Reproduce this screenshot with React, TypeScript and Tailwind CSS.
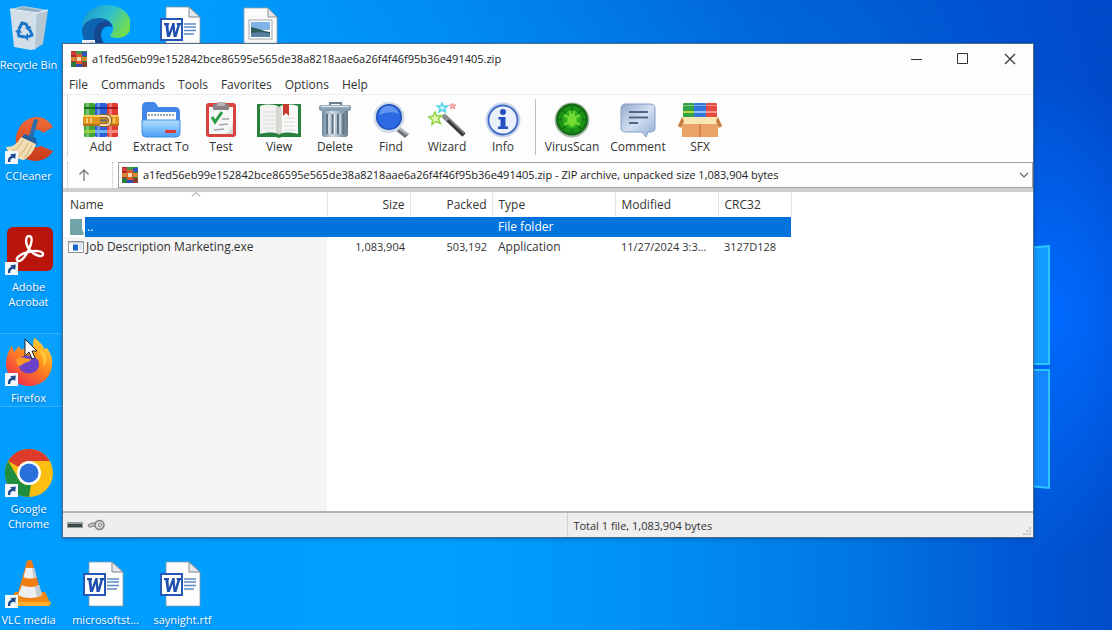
import type { ReactNode } from "react";

const FONT = "font-['Open_Sans','Noto_Sans',sans-serif]";
const ARCHIVE = "a1fed56eb99e152842bce86595e565de38a8218aae6a26f4f46f95b36e491405.zip";

/* ---------- desktop icons ---------- */

function ShortcutArrow() {
  return (
    <svg viewBox="0 0 13 13" className="absolute bottom-0 left-0 size-[13px]" aria-hidden="true">
      <rect width="13" height="13" fill="#f4f8fc" />
      <path d="M3 11C2.6 7.4 4 5.3 6.6 5L5.2 3.2 10.8 2.4 10.2 8 8.7 6.7C6 7.200 5.200 8.400 5.300 11z" fill="#1c4c8c" />
    </svg>
  );
}

function RecycleBinIcon() {
  return (
    <svg viewBox="0 0 48 48" className="size-12" aria-hidden="true">
      <path d="M5 4 18 1l25 4-6 4z" fill="#b4cbd8" />
      <path d="M5 4 32 8l-1 36-5 1-17-3z" fill="#d3dfe8" />
      <path d="M32 8 43 5 38 39l-8 5z" fill="#b5c6d2" />
      <path d="M8 5 18 2l21 4-7 2z" fill="#91b0c3" />
      <path d="M5 4 32 8l11-3" fill="none" stroke="#eaf3fa" strokeWidth="1.200" />
      <g fill="none" stroke="#1976c8" strokeWidth="3">
        <path d="m14 24 3-6 4 1 2 4" />
        <path d="m25 25 2 5-4 2" />
        <path d="m20 32-6-1-1-4" />
      </g>
      <path d="m20 23 6-2-1 6zM23 28l-4 4 4 4zM10 27l4-4 3 5z" fill="#1976c8" />
    </svg>
  );
}

function EdgeIcon() {
  return (
    <svg viewBox="0 0 48 48" className="size-12" aria-hidden="true">
      <defs>
        <linearGradient id="edge-top" x1="0" y1="0" x2="1" y2="0.5">
          <stop offset="0" stopColor="#1a8fd0" />
          <stop offset="0.55" stopColor="#2fc0cf" />
          <stop offset="1" stopColor="#6fdc52" />
        </linearGradient>
      </defs>
      <path d="M0 24C0 8 12 0 25 0c14 0 24 9 24 20 0 8-6 13-13 13-7 0-9-2-7-4 5-6 1-14-8-15C12 13 4 17 0 24z" fill="url(#edge-top)" />
      <path d="M0 25C1 17 9 13 17 13c8 0 13 4 13 9-5-3-11 1-11 8 0 9 8 16 24 9C38 46 31 48 24 48 10 48 0 38 0 25z" fill="#0f62ad" />
      <path d="M12 30c0-9 6-15 14-13 3 1 4 3 4 5-5-3-11 1-11 8 0 9 8 16 20 11-10 11-27 3-27-11z" fill="#15488f" />
    </svg>
  );
}

function WordIcon() {
  return (
    <svg viewBox="0 0 48 48" className="size-12" aria-hidden="true">
      <path d="M7 2h23l11 10v34H7z" fill="#fdfdfd" stroke="#8b98a6" strokeWidth="0.800" />
      <path d="M30 2v10h11z" fill="#e4e8ec" stroke="#7f8790" />
      <path d="M25 19h12M25 22h12M25 25.500h12M25 29h10" stroke="#5c8cc4" strokeWidth="1.500" />
      <rect x="2" y="14" width="21" height="21" fill="#fff" stroke="#2459b8" strokeWidth="2" />
      <path d="M5 18h5v2l-.6.2.6 7.300 3.400-9.500h2.200l.6 9.500 2.300-7.300-.8-.2v-2h4.300v2l-1 .3L17.500 32h-3l-.7-8-3 8H8L6.400 20.300 5 20z" fill="#1f4fae" />
    </svg>
  );
}

function ImageFileIcon() {
  return (
    <svg viewBox="0 0 48 48" className="size-12" aria-hidden="true">
      <path d="M8 3h24l9 9v34H8z" fill="#fafafa" stroke="#9aa2aa" strokeWidth="0.800" />
      <path d="M32 3v9h9z" fill="#e2e5e8" stroke="#8d949b" />
      <rect x="13" y="15" width="23" height="19" fill="#fff" stroke="#a0a7ad" />
      <path d="M15 17h19v8H15z" fill="#7fb4e4" />
      <path d="M15 22c6 1 12 4 19 5v5H15z" fill="#2f5b58" />
      <path d="M15 28c7-1 13-1 19 1v3H15z" fill="#577f9f" />
    </svg>
  );
}

function CCleanerIcon() {
  return (
    <svg viewBox="0 0 48 48" className="size-12" aria-hidden="true">
      <defs>
        <linearGradient id="cc-body" x1="0" y1="0" x2="0" y2="1">
          <stop offset="0" stopColor="#ef6c3a" />
          <stop offset="1" stopColor="#c93a1c" />
        </linearGradient>
      </defs>
      <path d="M48 11 38 17c-4-5-11-4-14 2-3 8 3 15 12 11l12 5c-6 10-17 12-27 8C10 37 8 23 14 12 21-1 39-4 48 11z" fill="url(#cc-body)" />
      <path d="m29 3 4 1-5 18-4-1z" fill="#2b6cab" />
      <path d="m19 18 12 4 1 7-16-6z" fill="#255f9f" />
      <path d="M16 21 31 28c-2 7-6 12-12 16C11 43 3 38 1 31c7 0 11-3 15-10z" fill="#f2deb2" />
      <path d="M18 24c-3 6-6 9-11 11M23 27c-2 6-5 9-9 13M27 29c-2 5-4 9-8 13" stroke="#cfae76" fill="none" />
    </svg>
  );
}

function AcrobatIcon() {
  return (
    <svg viewBox="0 0 48 48" className="size-12" aria-hidden="true">
      <rect x="2" y="0" width="46" height="44" rx="6" fill="#b9150b" />
      <path
        d="M24 9c4 0 3 7 0 13-3 7-8 13-11 12-4-2 2-7 10-9 7-2 15-1 15 2 0 4-8 2-13-4-5-5-5-14-1-14z"
        fill="none"
        stroke="#fff"
        strokeWidth="2.400"
      />
    </svg>
  );
}

function FirefoxIcon() {
  return (
    <svg viewBox="0 0 48 48" className="size-12" aria-hidden="true">
      <defs>
        <linearGradient id="fx-body" x1="0.9" y1="0" x2="0.2" y2="1">
          <stop offset="0" stopColor="#ffe23c" />
          <stop offset="0.45" stopColor="#ff8a1e" />
          <stop offset="1" stopColor="#f0264e" />
        </linearGradient>
      </defs>
      <path d="M30 0c4 4 8 6 9 11l3-1c4 6 6 11 5 17-1 13-11 21-23 21S2 39 1 27C1 18 4 12 7 8l2 6 5-6 2 4c5-3 10-3 12-4 0-4 0-6 2-8z" fill="url(#fx-body)" />
      <path d="M13 21c4-4 13-5 18-1 4 3 4 10 0 13-5 4-13 3-16-2-2-3-3-7-2-10z" fill="#6b42c8" />
      <path d="M12 20c4-2 8 1 14 1 0 3-5 3-8 5-2 1-3 3-5 2-2-3-2-5-1-8z" fill="#ff9a2a" />
      <path d="M34 12c4 5 6 10 4 17 5-6 4-14-4-17z" fill="#ffd03a" />
    </svg>
  );
}

function ChromeIcon() {
  return (
    <svg viewBox="0 0 48 48" className="size-12" aria-hidden="true">
      <circle cx="24" cy="24" r="24" fill="#fbbf12" />
      <path d="M3.200 12A24 24 0 0 1 44.800 12H24A12 12 0 0 0 13.600 18z" fill="#dd3b2b" />
      <path d="M3.200 12 13.600 30A12 12 0 0 0 26 35.800L24 48A24 24 0 0 1 3.200 12z" fill="#1f8e3e" />
      <circle cx="24" cy="24" r="12" fill="#fff" />
      <circle cx="24" cy="24" r="9.500" fill="#2a70dc" />
    </svg>
  );
}

function VlcIcon() {
  return (
    <svg viewBox="0 0 48 48" className="size-12" aria-hidden="true">
      <path d="M10 32h30l6 12-2 2H8l-4-2z" fill="#f08a12" />
      <path d="M4 42h42l-2 4H8z" fill="#ffae2b" />
      <path d="M22 1q3-2 5 0l10 35c-5 5-20 5-25 0z" fill="#f27d12" />
      <path d="M21 8h8l2.500 9c-3 2-10 2-13 0zM17 25c4 2.500 13 2.500 17 0l3 10c-5 4-19 4-24 0z" fill="#eceef0" />
      <path d="M29 8 31.500 17l-3 1L27 8zM34 25l3 10-5 2-2-10z" fill="#c4cad0" />
    </svg>
  );
}

interface DesktopItemProps {
  label: string;
  icon: ReactNode;
  place: string;
  shortcut?: boolean;
  selected?: boolean;
}

function DesktopItem({ label, icon, place, shortcut = false, selected = false }: DesktopItemProps) {
  return (
    <button
      type="button"
      className={`flex flex-col items-center gap-1 self-start border-y pt-1 pb-px text-[11px] leading-[15px] text-white [text-shadow:0_1px_2px_rgba(0,50,110,0.5)] ${
        selected ? "border-[#38b0ff] bg-[#2fb0ff]/20" : "border-transparent"
      } ${place}`}
    >
      <span className="relative">
        {icon}
        {shortcut && <ShortcutArrow />}
      </span>
      <span className="whitespace-pre-line">{label}</span>
    </button>
  );
}

const desktopItems: DesktopItemProps[] = [
  { label: "Recycle Bin", icon: <RecycleBinIcon />, place: "col-start-1 row-start-1" },
  { label: "CCleaner", icon: <CCleanerIcon />, place: "col-start-1 row-start-2", shortcut: true },
  { label: "Adobe\nAcrobat", icon: <AcrobatIcon />, place: "col-start-1 row-start-3", shortcut: true },
  { label: "Firefox", icon: <FirefoxIcon />, place: "col-start-1 row-start-4", shortcut: true, selected: true },
  { label: "Google\nChrome", icon: <ChromeIcon />, place: "col-start-1 row-start-5", shortcut: true },
  { label: "VLC media", icon: <VlcIcon />, place: "col-start-1 row-start-6", shortcut: true },
  { label: "", icon: <EdgeIcon />, place: "col-start-2 row-start-1", shortcut: true },
  { label: "microsoftst...", icon: <WordIcon />, place: "col-start-2 row-start-6" },
  { label: "", icon: <WordIcon />, place: "col-start-3 row-start-1" },
  { label: "saynight.rtf", icon: <WordIcon />, place: "col-start-3 row-start-6" },
  { label: "", icon: <ImageFileIcon />, place: "col-start-4 row-start-1" },
];

/* ---------- toolbar icons ---------- */

function BooksIcon({ className }: { className: string }) {
  return (
    <svg viewBox="0 0 36 36" className={className} aria-hidden="true">
      <rect x="1" y="1" width="11" height="34" rx="1.500" fill="#3fa535" />
      <rect x="12" y="1" width="12" height="34" rx="1.500" fill="#2b62d9" />
      <rect x="24" y="1" width="11" height="34" rx="1.500" fill="#e23b34" />
      <path d="M3 1h3v34H3zM14 1h3v34h-3zM26 1h3v34h-3z" fill="#fff" opacity="0.3" />
      <path d="M1 5h11v2H1z" fill="#1c6f24" />
      <path d="M12 5h12v2H12z" fill="#173c9e" />
      <path d="M24 5h11v2H24z" fill="#a51d22" />
      <path d="M1 28h11v3H1z" fill="#8fce3c" />
      <path d="M12 28h12v3H12z" fill="#6fb3f5" />
      <path d="M24 28h11v3H24z" fill="#f78c80" />
      <rect y="13" width="36" height="11" fill="#e2951d" />
      <path d="M0 13h36v2H0z" fill="#f7cf5f" />
      <path d="M0 22h36v2H0z" fill="#b8701a" />
      <path d="M4 16v5M8 16v5M31 16v5" stroke="#fbe08c" strokeWidth="1.500" />
      <path d="M17 14h6q4 0 4 4.500T23 23h-6" fill="none" stroke="#8e5a17" strokeWidth="4" />
      <path d="M17 14h6q4 0 4 4.500T23 23h-6" fill="none" stroke="#f1dcb4" strokeWidth="2" />
      <path d="M17 18.500h7" stroke="#6d6d6d" strokeWidth="2.500" />
    </svg>
  );
}

function MiniBooksIcon() {
  return (
    <svg viewBox="0 0 16 16" className="size-4 shrink-0" aria-hidden="true">
      <path d="M0 0h5v16H0z" fill="#a92a30" />
      <path d="M5 0h6v16H5z" fill="#3448b4" />
      <path d="M11 0h5v16h-5z" fill="#258c43" />
      <path d="M0 1h5v3H0z" fill="#d93b35" />
      <path d="M5 0h6v3H5z" fill="#3c9a45" />
      <path d="M11 1h5v4h-5z" fill="#3253bd" />
      <path d="M0 11h5v5H0z" fill="#287b3c" />
      <path d="M11 11h5v5h-5z" fill="#8c3f2f" />
      <path d="M0 6h16v4H0z" fill="#d98a32" />
      <path d="M5 3h6v10H5z" fill="#e05a2c" />
      <path d="M6 6h4v4H6z" fill="#f6dfae" />
    </svg>
  );
}

function ExtractIcon() {
  return (
    <svg viewBox="0 0 40 36" className="h-9 w-10" aria-hidden="true">
      <defs>
        <linearGradient id="folder-front" x1="0" y1="0" x2="0" y2="1">
          <stop offset="0" stopColor="#b4deff" />
          <stop offset="1" stopColor="#4aa0f4" />
        </linearGradient>
      </defs>
      <path d="M1 5q0-5 5-5h6q3 0 5 5h17q5 0 5 5v16H1z" fill="#4286ea" />
      <path d="M6 10h29v10H6z" fill="#fff" />
      <path d="M7 13h27" stroke="#9aa4b0" strokeWidth="2" strokeDasharray="2 1" />
      <path d="M1 18h38v13q0 4-4 4H5q-4 0-4-4z" fill="url(#folder-front)" stroke="#3e8ee6" />
      <rect x="24" y="28" width="11" height="3" rx="1" fill="#e0393b" />
    </svg>
  );
}

function TestIcon() {
  return (
    <svg viewBox="0 0 32 36" className="h-9 w-8" aria-hidden="true">
      <rect x="1" y="1" width="30" height="34" rx="3" fill="#d8433f" />
      <path d="M4 5h24v27H4z" fill="#f7f7f7" />
      <path d="M28 20v12h-8c5-2 7-6 8-12z" fill="#d7d9dc" />
      <rect x="8" y="2" width="16" height="6" rx="1" fill="#8c8286" />
      <path d="M12 0h8v4h-8z" fill="#b9b2b5" />
      <path d="m7 15 3 5 7-10" fill="none" stroke="#2c9b45" strokeWidth="3" />
      <path d="M17 17h7M14 23l9-1M9 28l10-1" stroke="#a3a6ab" strokeWidth="1.500" />
    </svg>
  );
}

function ViewIcon() {
  return (
    <svg viewBox="0 0 44 36" className="h-9 w-11" aria-hidden="true">
      <path d="M0 2h44v33H25l-3 1-3-1H0z" fill="#27803c" />
      <path d="M3 4c7-2 14-2 19 1v27c-5-2-12-2-19 0z" fill="#f2f2f0" />
      <path d="M41 4c-7-2-14-2-19 1v27c5-2 12-2 19 0z" fill="#fafaf8" />
      <path d="M22 5v28M20 5v27M24 5v27" stroke="#b9b9b5" />
      <path d="M6 10h12M6 14h12M6 18h12M6 22h12M6 26h12M27 16h11M27 20h11M27 24h11M27 28h11" stroke="#dadad8" />
      <path d="M26 2h6v12l-3-3-3 3z" fill="#c53a2e" />
    </svg>
  );
}

function DeleteIcon() {
  return (
    <svg viewBox="0 0 34 36" className="h-9 w-[34px]" aria-hidden="true">
      <defs>
        <linearGradient id="can" x1="0" x2="1">
          <stop offset="0" stopColor="#71899c" />
          <stop offset="0.4" stopColor="#d4dfe7" />
          <stop offset="1" stopColor="#66798a" />
        </linearGradient>
      </defs>
      <path d="M12 3V1h11v2" fill="none" stroke="#6d7f8d" strokeWidth="2" />
      <path d="M4 9h26v23q0 3-3 3H7q-3 0-3-3z" fill="url(#can)" />
      <path d="M9 12v20M14.500 12v20M20 12v20M25.500 12v20" stroke="#5d7386" strokeWidth="2" />
      <path d="M11 12v20M16.500 12v20M22 12v20" stroke="#eaf0f4" />
      <rect x="1" y="3" width="32" height="6" rx="2" fill="#8a9faf" />
      <path d="M3 4.500h28" stroke="#dce5ec" strokeWidth="1.500" />
    </svg>
  );
}

function FindIcon() {
  return (
    <svg viewBox="0 0 38 36" className="h-9 w-[38px]" aria-hidden="true">
      <path d="m25 24 12 8-4 4-11-9z" fill="#707478" />
      <path d="m27 24 9 7-1 2-10-7z" fill="#b5b9bd" />
      <circle cx="17" cy="15.500" r="15.500" fill="#d2dbe8" />
      <circle cx="17" cy="15" r="13" fill="#1e4fb8" />
      <circle cx="17" cy="15" r="11.500" fill="#2c6be4" />
      <path d="M7 13C8 5 14 3 19 4c4 1 7 4 8 8-6-3-13-2-20 1z" fill="#5f95f0" />
    </svg>
  );
}

function WizardIcon() {
  return (
    <svg viewBox="0 0 38 36" className="h-9 w-[38px]" aria-hidden="true">
      <path d="M16 14 36 33" stroke="#3c3c3e" strokeWidth="4.500" />
      <path d="m17 13 19 18" stroke="#919193" strokeWidth="1.200" />
      <path d="m15 13 5 5" stroke="#8d8d90" strokeWidth="4.500" />
      <path d="m7 10 1.500 4 5-.5-3 3.500 2 4.500-4.500-2-4 3 .5-4.500-4-3 4.500-1z" fill="#e4f7b4" stroke="#8ed445" strokeWidth="1.500" />
      <path d="m14 1 1.500 3h4l-3 2.500 1 3.500-3.500-2-3 2 1-3.500-3-2.500h4z" fill="#d7f7fc" stroke="#54d2ea" strokeWidth="1.500" />
      <path d="m24.500 1 1 2h2.500l-2 1.500.7 2.500-2.200-1.500-2 1.500.7-2.500-2-1.500h2.300z" fill="#f7b6b6" stroke="#f09494" />
    </svg>
  );
}

function InfoIcon() {
  return (
    <svg viewBox="0 0 36 36" className="size-9" aria-hidden="true">
      <circle cx="18" cy="18" r="17.500" fill="#c9d5ea" />
      <circle cx="18" cy="18" r="14.500" fill="#eaf1fc" stroke="#416ac6" strokeWidth="1.800" />
      <circle cx="18" cy="10" r="3" fill="#234fc0" />
      <path d="M13.500 15h7v9.500H23V27H13v-2.500h2.500v-7h-2z" fill="#234fc0" />
    </svg>
  );
}

function VirusIcon() {
  return (
    <svg viewBox="0 0 36 36" className="size-9" aria-hidden="true">
      <circle cx="18" cy="18" r="17.500" fill="#afb8ad" />
      <circle cx="18" cy="17.500" r="16" fill="#136b16" />
      <circle cx="18" cy="17.500" r="13.500" fill="#1b9418" />
      <circle cx="18" cy="17.500" r="9" fill="#30b31f" />
      <path d="M18 2v6M18 27v6M2 17.500h6M28 17.500h6M7 7l5 4M29 7l-5 4M7 28l5-4M29 28l-5-4" stroke="#0f7813" strokeWidth="1.800" />
      <ellipse cx="18" cy="18" rx="4.500" ry="6.500" fill="#76da32" />
      <path d="m10 13 5 3M10 23l5-3M26 13l-5 3M26 23l-5-3M15 9l2 4M21 9l-2 4" stroke="#7fdc3c" strokeWidth="1.500" />
    </svg>
  );
}

function CommentIcon() {
  return (
    <svg viewBox="0 0 36 36" className="size-9" aria-hidden="true">
      <defs>
        <linearGradient id="bubble" x1="0" y1="0" x2="1" y2="1">
          <stop offset="0" stopColor="#93a9cb" />
          <stop offset="0.5" stopColor="#d3e0f2" />
          <stop offset="1" stopColor="#90aad2" />
        </linearGradient>
      </defs>
      <path d="M6 2h24q5 0 5 5v19q0 4-5 4h-2l-2 5-4-5H6q-5 0-5-4V7q0-5 5-5z" fill="url(#bubble)" stroke="#859fc6" />
      <path d="M9 10h19M9 15.500h19M9 21h9" stroke="#526587" strokeWidth="1.800" />
    </svg>
  );
}

function SfxIcon() {
  return (
    <svg viewBox="0 0 44 36" className="h-9 w-11" aria-hidden="true">
      <rect x="5" y="1" width="11" height="16" rx="1" fill="#32a443" />
      <rect x="16" y="1" width="12" height="16" rx="1" fill="#3474db" />
      <rect x="28" y="1" width="11" height="16" rx="1" fill="#e74b3f" />
      <path d="M5 3h11v1H5zM16 3h12v1H16zM28 3h11v1H28z" fill="#fff" opacity="0.4" />
      <path d="M5 9h11v2H5z" fill="#b9d83f" />
      <path d="M16 9h12v2H16z" fill="#8dc5fb" />
      <path d="M28 9h11v2H28z" fill="#fb958a" />
      <path d="M4 21h36v14H4z" fill="#eba266" />
      <path d="M22 22v13" stroke="#b56b33" />
      <path d="M4 15h36v7H4z" fill="#fae6b0" />
      <path d="m4 15-4 9 3 2 3-7zM40 15l4 9-3 2-3-7z" fill="#cb7a3d" />
    </svg>
  );
}

const archiveTools = [
  { label: "Add", icon: <BooksIcon className="size-9" />, width: "w-[60px]" },
  { label: "Extract To", icon: <ExtractIcon />, width: "w-[60px]" },
  { label: "Test", icon: <TestIcon />, width: "w-[60px]" },
  { label: "View", icon: <ViewIcon />, width: "w-[56px]" },
  { label: "Delete", icon: <DeleteIcon />, width: "w-[56px]" },
  { label: "Find", icon: <FindIcon />, width: "w-[56px]" },
  { label: "Wizard", icon: <WizardIcon />, width: "w-[56px]" },
  { label: "Info", icon: <InfoIcon />, width: "w-[56px]" },
];

const extraTools = [
  { label: "VirusScan", icon: <VirusIcon />, width: "w-[68px]" },
  { label: "Comment", icon: <CommentIcon />, width: "w-[64px]" },
  { label: "SFX", icon: <SfxIcon />, width: "w-[60px]" },
];

function ToolButton({ label, icon, width }: { label: string; icon: ReactNode; width: string }) {
  return (
    <button type="button" className={`flex flex-col items-center gap-px whitespace-nowrap ${width}`}>
      {icon}
      <span>{label}</span>
    </button>
  );
}

/* ---------- archive window ---------- */

function TitleBar() {
  return (
    <header className="flex h-[30px] shrink-0 items-center pl-2">
      <MiniBooksIcon />
      <h1 className="ml-[5px] flex-1 truncate text-[11px] text-[#222]">{ARCHIVE}</h1>
      <button type="button" aria-label="Minimize" className="flex h-full w-[47px] items-center justify-center">
        <svg viewBox="0 0 12 12" className="size-3" stroke="#333">
          <path d="M1 6.500h11" />
        </svg>
      </button>
      <button type="button" aria-label="Maximize" className="flex h-full w-[47px] items-center justify-center">
        <svg viewBox="0 0 12 12" className="size-3" fill="none" stroke="#333">
          <path d="M.5 .5h10v10H.5z" />
        </svg>
      </button>
      <button type="button" aria-label="Close" className="flex h-full w-[47px] items-center justify-center">
        <svg viewBox="0 0 12 12" className="size-3" stroke="#333" strokeWidth="1.200">
          <path d="m1 1 10 10M11 1 1 11" />
        </svg>
      </button>
    </header>
  );
}

function MenuBar() {
  return (
    <nav className="flex h-[21px] shrink-0 items-center gap-[13px] border-b border-[#ececec] pt-px pl-[6px]">
      {["File", "Commands", "Tools", "Favorites", "Options", "Help"].map((item) => (
        <button key={item} type="button">
          {item}
        </button>
      ))}
    </nav>
  );
}

function AddressBar() {
  return (
    <div className="flex h-[26px] shrink-0">
      <button
        type="button"
        aria-label="Up one level"
        className="ml-1 flex w-[46px] items-center justify-center border-x border-dotted border-[#bbb] pr-3"
      >
        <svg viewBox="0 0 12 12" className="size-3" fill="none" stroke="#777" strokeWidth="1.300">
          <path d="M6 12V1M1.500 5.500 6 1l4.500 4.500" />
        </svg>
      </button>
      <div className="ml-[5px] flex min-w-0 flex-1 items-center border border-[#9f9f9f] pl-[3px]">
        <MiniBooksIcon />
        <select
          aria-label="Archive path"
          className="ml-[5px] h-full min-w-0 flex-1 appearance-none text-[11px] text-[#222] outline-none"
        >
          <option>{ARCHIVE} - ZIP archive, unpacked size 1,083,904 bytes</option>
        </select>
        <svg viewBox="0 0 10 10" className="pointer-events-none mr-[3px] size-[10px]" fill="none" stroke="#666" strokeWidth="1.200">
          <path d="m1 3 4 4 4-4" />
        </svg>
      </div>
    </div>
  );
}

function FileList() {
  return (
    <main className="flex min-h-0 flex-1 flex-col border-t-4 border-[#cfcfcf] bg-white">
      <table className="w-[728px] table-fixed border-collapse text-left">
        <colgroup>
          <col className="w-[264px]" />
          <col className="w-[83px]" />
          <col className="w-[82px]" />
          <col className="w-[123px]" />
          <col className="w-[103px]" />
          <col className="w-[73px]" />
        </colgroup>
        <thead>
          <tr className="h-[25px] *:border-r *:border-[#e6e6e6] *:font-normal">
            <th scope="col" className="relative pl-[7px]">
              Name
              <svg viewBox="0 0 10 5" className="absolute top-0 left-1/2 -ml-1 h-[5px] w-[10px]" fill="none" stroke="#888">
                <path d="m1 4.500 4-4 4 4" />
              </svg>
            </th>
            <th scope="col" className="pr-[5px] text-right">Size</th>
            <th scope="col" className="pr-[5px] text-right">Packed</th>
            <th scope="col" className="pl-[6px]">Type</th>
            <th scope="col" className="pl-[6px]">Modified</th>
            <th scope="col" className="pl-[6px]">CRC32</th>
          </tr>
        </thead>
        <tbody>
          <tr className="h-5 bg-[#0073dd] text-white">
            <td className="bg-white">
              <div className="flex h-5 items-center">
                <svg viewBox="0 0 22 20" className="h-5 w-[22px] shrink-0" aria-hidden="true">
                  <path d="M7 2h12v10l2 5-1 1H7z" fill="#71a4a7" />
                </svg>
                <span className="flex h-full flex-1 items-center bg-[#0073dd] pl-[2px]">..</span>
              </div>
            </td>
            <td />
            <td />
            <td className="pl-[6px]">File folder</td>
            <td />
            <td />
          </tr>
          <tr className="h-5">
            <td className="bg-[#f5f5f5]">
              <div className="flex h-5 items-center pl-[5px]">
                <svg viewBox="0 0 16 14" className="h-[14px] w-4 shrink-0" aria-hidden="true">
                  <path d="M.5 1.500h15v11H.5z" fill="#fff" stroke="#8a9199" />
                  <path d="M1 2h14v1.500H1z" fill="#c8cdd2" />
                  <path d="M5 4.500h5v6H5z" fill="#1566c8" />
                  <path d="M11 5h3M11 7h3M11 9h3" stroke="#b3c6da" />
                </svg>
                <span className="pl-[2px]">Job Description Marketing.exe</span>
              </div>
            </td>
            <td className="pr-[5px] text-right text-[11px]">1,083,904</td>
            <td className="pr-[5px] text-right text-[11px]">503,192</td>
            <td className="pl-[6px]">Application</td>
            <td className="pl-[6px] text-[11px]">11/27/2024 3:3...</td>
            <td className="pl-[6px] text-[11px]">3127D128</td>
          </tr>
        </tbody>
      </table>
      <div className="w-[264px] flex-1 bg-[#f5f5f5]" />
    </main>
  );
}

function StatusBar() {
  return (
    <footer className="flex h-[26px] shrink-0 items-stretch border-t-2 border-[#b4b4b4] bg-[#eee]">
      <div className="flex w-[52%] items-center gap-1 pl-1">
        <svg viewBox="0 0 16 8" className="h-2 w-4" aria-hidden="true">
          <path d="M0 1h16v6H0z" fill="#9a9d9f" />
          <path d="M1 3h14v3H1z" fill="#3a4a48" />
        </svg>
        <svg viewBox="0 0 18 12" className="h-3 w-[18px]" fill="none" stroke="#7d7d7d" aria-hidden="true">
          <path d="M10 4H5L1 6l1 2h3l1-1h4" fill="#c4c4c4" />
          <circle cx="12.500" cy="6" r="4.500" fill="#d6d6d6" strokeWidth="1.500" />
          <circle cx="13" cy="6" r="1.500" fill="#fff" />
        </svg>
      </div>
      <div className="flex flex-1 items-center border-l border-[#d0d0d0] pt-[2px] pl-[5px] text-[11px]">
        Total 1 file, 1,083,904 bytes
      </div>
      <svg viewBox="0 0 10 10" className="mr-px mb-px size-[10px] self-end" fill="#c4c8c4" aria-hidden="true">
        <path d="M7 1h2v2H7zM7 4h2v2H7zM4 4h2v2H4zM7 7h2v2H7zM4 7h2v2H4zM1 7h2v2H1z" />
      </svg>
    </footer>
  );
}

function ArchiveWindow() {
  return (
    <section className="absolute top-[43px] right-[78px] bottom-[92px] left-[62px] flex flex-col border border-[#4b6a85] bg-[#fdfdfd] text-[12px] leading-4 text-[#333] shadow-[0_1px_4px_rgba(0,20,60,0.3)]">
      <TitleBar />
      <MenuBar />
      <div className="flex h-[67px] shrink-0 items-start pl-1">
        <div className="flex h-[62px] border-l border-dotted border-[#bbb] pt-[7px] pl-[3px]">
          {archiveTools.map((tool) => (
            <ToolButton key={tool.label} {...tool} />
          ))}
        </div>
        <div className="mt-1 ml-1 flex h-14 border-l border-[#bdbdbd] pt-[3px] pl-[2px]">
          {extraTools.map((tool) => (
            <ToolButton key={tool.label} {...tool} />
          ))}
        </div>
      </div>
      <AddressBar />
      <FileList />
      <StatusBar />
    </section>
  );
}

/* ---------- desktop ---------- */

function Wallpaper() {
  return (
    <div className="absolute inset-0 bg-[linear-gradient(90deg,#009dff_0%,#00a0ff_40%,#0090f4_58%,#0078e4_76%,#0058d4_92%,#004cca_100%)]">
      <div className="absolute inset-0 bg-[linear-gradient(180deg,rgba(0,70,200,0.5)_0%,rgba(0,70,200,0)_50%)] [mask-image:linear-gradient(90deg,transparent_15%,black_70%)]" />
      <div className="absolute inset-0 bg-[radial-gradient(ellipse_130px_240px_at_95%_50%,#006aff_0%,rgba(0,106,255,0)_100%)]" />
      <svg
        viewBox="0 0 20 246"
        className="absolute top-[245px] right-[61px] h-[246px] w-5"
        fill="#129cff"
        stroke="#2cc5fb"
        strokeWidth="2"
        aria-hidden="true"
      >
        <path d="M-2 3 18 1v118H-2z" />
        <path d="M-2 125h20v118l-20-2z" fill="#1489ff" />
      </svg>
    </div>
  );
}

export default function App() {
  return (
    <div className={`relative h-screen overflow-hidden ${FONT}`}>
      <Wallpaper />
      <div className="relative -ml-[10px] grid w-max auto-rows-[111px] grid-cols-[repeat(4,77px)]">
        {desktopItems.map((item) => (
          <DesktopItem key={item.place} {...item} />
        ))}
      </div>
      <ArchiveWindow />
      <svg viewBox="0 0 14 22" className="absolute top-[338px] left-[24px] h-[22px] w-[14px]" aria-hidden="true">
        <path d="M1 1v17l4-4 3 7 3-1.300-3-6.700h5z" fill="#fff" stroke="#222" />
      </svg>
    </div>
  );
}
